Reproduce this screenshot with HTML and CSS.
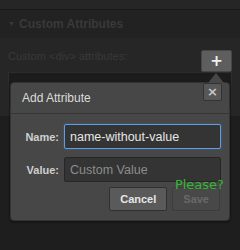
FILE: index.html
```html
<!DOCTYPE html>
<html>
<head>
  <meta charset="utf-8">
  <title>Custom Attributes</title>
  <link rel="stylesheet" href="styles.css">
</head>
<body>
  <div class="topbar"></div>
  <div class="section-head"><span class="arrow">&#9660;</span>Custom Attributes</div>
  <div class="section-body">
    <div class="attr-row">
      <span class="attr-label">Custom &lt;div&gt; attributes:</span>
      <button class="add-btn">+</button>
    </div>
    <div class="attr-list"></div>
  </div>

  <div class="dialog">
    <div class="caret"></div>
    <div class="dialog-head">
      Add Attribute
      <button class="close-btn">&#215;</button>
    </div>
    <form class="dialog-body">
      <label for="attr-name">Name:</label>
      <input id="attr-name" class="focused" type="text" value="name-without-value">
      <label for="attr-value">Value:</label>
      <input id="attr-value" type="text" placeholder="Custom Value">
      <div class="actions">
        <button type="button" class="btn">Cancel</button>
        <button type="button" class="btn" disabled>Save</button>
        <span class="hint">Please?</span>
      </div>
    </form>
  </div>
</body>
</html>
```

FILE: styles.css
```css
body {
  margin: 0;
  width: 240px;
  height: 250px;
  background: #1e1e1e;
  font-family: "Liberation Sans", Arial, sans-serif;
  position: relative;
  overflow: hidden;
}

.topbar {
  height: 9px;
  background: #262626;
  border-bottom: 1px solid #1a1a1a;
}

.section-head {
  height: 28px;
  line-height: 28px;
  background: #222;
  color: #393939;
  font-size: 12px;
  font-weight: bold;
  padding-left: 8px;
}

.arrow {
  font-size: 7px;
  display: inline-block;
  width: 11px;
  vertical-align: 2px;
}

.section-body {
  background: #262626;
  padding: 12px 8px 8px;
}

.attr-row {
  display: flex;
  justify-content: space-between;
  align-items: flex-start;
}

.attr-label {
  color: #393939;
  font-size: 11px;
  line-height: 13px;
}

.add-btn {
  width: 31px;
  height: 22px;
  padding: 0;
  background: #5e5e5e;
  border: 1px solid #474747;
  border-radius: 2px;
  color: #f0f0f0;
  font-family: "DejaVu Sans", sans-serif;
  font-size: 15px;
  font-weight: bold;
  line-height: 18px;
}

.attr-list {
  height: 35px;
  background: #1c1c1c;
  border: 1px solid #2c2c2c;
  border-bottom: none;
}

.dialog {
  position: absolute;
  left: 10px;
  top: 82px;
  width: 218px;
  height: 137px;
  background: #474747;
  border: 1px solid #333;
  border-radius: 4px;
  box-shadow: 0 1px 3px rgba(0, 0, 0, 0.5);
}

.caret {
  position: absolute;
  top: -10px;
  right: 5px;
  width: 0;
  height: 0;
  border-left: 8px solid transparent;
  border-right: 8px solid transparent;
  border-bottom: 10px solid #474747;
}

.dialog-head {
  position: relative;
  height: 30px;
  line-height: 30px;
  padding-left: 11px;
  color: #dcdcdc;
  font-size: 12px;
  border-bottom: 1px solid #363636;
}

.close-btn {
  position: absolute;
  top: 0;
  right: 7px;
  width: 19px;
  height: 18px;
  padding: 0;
  background: #575757;
  border: 1px solid #333;
  border-radius: 2px;
  color: #c8c8c8;
  font-family: "DejaVu Sans", sans-serif;
  font-size: 13px;
  font-weight: bold;
  line-height: 14px;
}

.dialog-body {
  display: grid;
  grid-template-columns: 44px 157px;
  column-gap: 5px;
  row-gap: 8px;
  align-items: center;
  padding: 10px 9px 0 4px;
  margin: 0;
}

.dialog-body label {
  text-align: right;
  color: #cfcfcf;
  font-size: 11px;
  font-weight: bold;
}

.dialog-body input {
  box-sizing: border-box;
  width: 157px;
  height: 25px;
  margin: 0;
  padding: 0 5px;
  background: #343434;
  border: 1px solid #262626;
  border-radius: 2px;
  color: #e6e6e6;
  font-family: inherit;
  font-size: 12.5px;
  outline: none;
}

.dialog-body input::placeholder {
  color: #8c8c8c;
}

.dialog-body input.focused {
  border: 1px solid #5f9de0;
  box-shadow: 0 0 2px #3d6e9e;
}

.actions {
  grid-column: 1 / 3;
  position: relative;
  display: flex;
  justify-content: flex-end;
  gap: 5px;
  margin-top: -3px;
  margin-right: 1px;
}

.btn {
  height: 24px;
  padding: 0 10px;
  background: #5a5a5a;
  border: 1px solid #303030;
  border-radius: 2px;
  color: #e6e6e6;
  font-family: inherit;
  font-size: 11px;
  font-weight: bold;
}

.btn:disabled {
  background: #484848;
  border-color: #3c3c3c;
  color: #696969;
}

.hint {
  position: absolute;
  right: -4px;
  top: -10px;
  color: #33b633;
  font-family: "DejaVu Sans", sans-serif;
  font-size: 13px;
  line-height: 15px;
}
```
